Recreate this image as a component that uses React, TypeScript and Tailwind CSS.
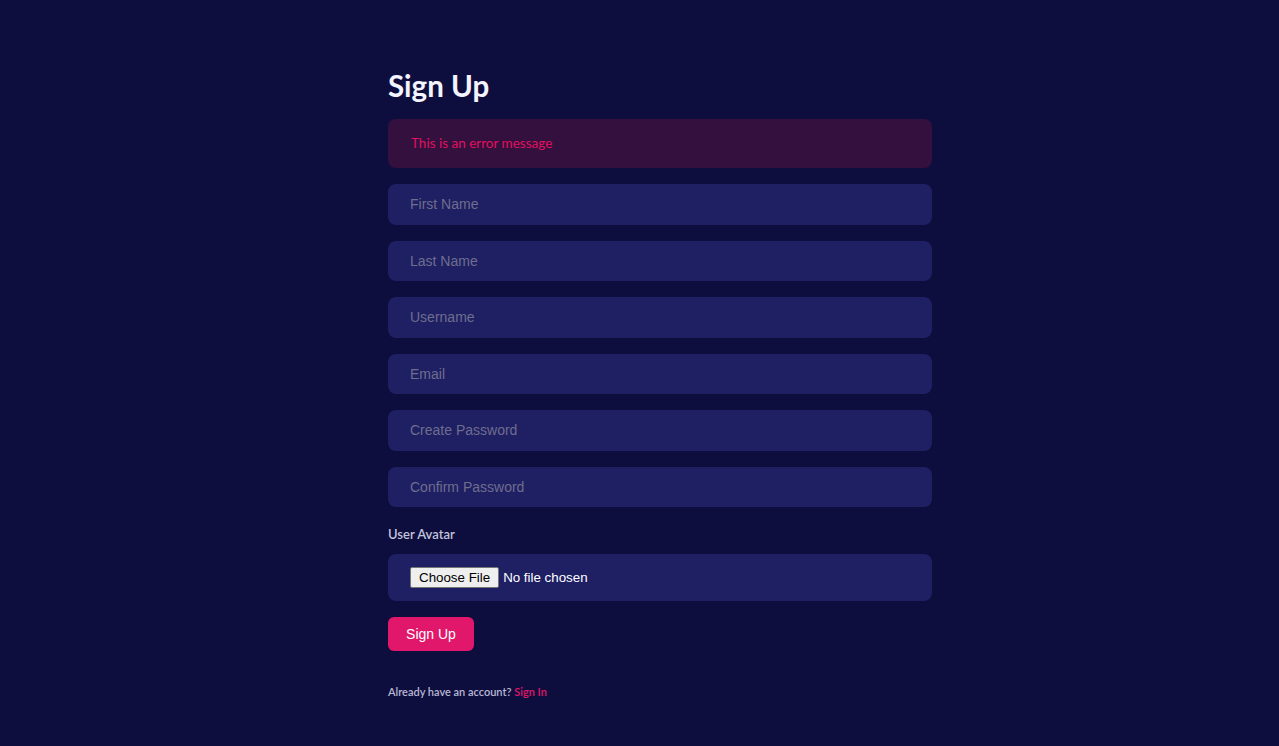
export default function App() {
  const fields = ["First Name", "Last Name", "Username", "Email", "Create Password", "Confirm Password"];
  return (
    <div className="min-h-[746px] w-full bg-[#0e0e3e] pl-[41px] font-['Lato',sans-serif]">
      <div className="mx-auto w-[544px] pt-[68px]">
        <h1 className="text-[29.5px] font-bold leading-[36px] text-[#f4f4ff]">Sign Up</h1>
        <div className="mt-[15px] flex h-[48.5px] items-center rounded-lg bg-[#33103e] pl-[23px] text-[13.5px] text-[#e0115f]">
          This is an error message
        </div>
        <div className="mt-[16.5px] flex flex-col gap-4">
          {fields.map((f) => (
            <input
              key={f}
              placeholder={f}
              type={f.includes("Password") ? "password" : "text"}
              className="h-[40.5px] rounded-lg bg-[#1f1f63] pl-[22px] font-['Liberation_Sans',Arial,sans-serif] text-sm text-white outline-none placeholder:text-[#6e6e8e]"
            />
          ))}
        </div>
        <label className="mt-[19px] block text-[13px] font-semibold leading-[16px] text-[#c3c3dc]">User Avatar</label>
        <div className="mt-[12px] flex h-[47px] items-center rounded-lg bg-[#1f1f63] pl-[22px]">
          <input
            type="file"
            className="font-['Liberation_Sans',Arial,sans-serif] text-[13.33px] text-white file:mr-[4px] file:h-[21px] file:rounded-[2px] file:border file:border-solid file:border-[#767676] file:bg-[#efefef] file:px-[8px] file:text-[13.33px] file:text-black"
          />
        </div>
        <button className="mt-[16px] h-[34px] w-[86px] rounded-md bg-[#e0176b] font-['Liberation_Sans',Arial,sans-serif] text-sm text-white">
          Sign Up
        </button>
        <p className="mt-[33px] text-[11px] font-semibold text-[#b8b8d4]">
          Already have an account? <span className="text-[#e0176b]">Sign In</span>
        </p>
      </div>
    </div>
  );
}
